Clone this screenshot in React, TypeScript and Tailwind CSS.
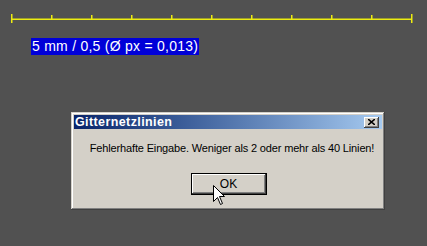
import React from "react";

const TICKS = [11, 51, 91, 131, 171, 211, 251, 291, 331, 371, 411];

function Ruler() {
  return (
    <svg width="427" height="26" className="block fill-[#ecec10]">
      <rect x="11" y="18.5" width="401" height="1.5" />
      {TICKS.map((x, i) => {
        const end = i === 0 || i === TICKS.length - 1;
        return <rect key={x} x={x} y={end ? 14 : 15} width={1.5} height={end ? 9 : 4} />;
      })}
    </svg>
  );
}

function Cursor() {
  return (
    <svg width="13" height="22" viewBox="0 0 13 22" className="absolute left-[213px] top-[185px]">
      <path
        d="M0.5 0.5 L0.5 16.5 L4.5 12.5 L7.5 19.5 L9.5 18.5 L6.5 11.5 L11.5 11.5 Z"
        fill="#fff"
        stroke="#000"
        strokeWidth="1"
      />
    </svg>
  );
}

export default function App() {
  return (
    <div className="relative w-[427px] h-[246px] bg-[#515151] overflow-hidden flex flex-col font-['Liberation_Sans',Arial,sans-serif]">
      <Ruler />

      <div className="ml-[31px] mt-[12px] self-start h-[17px] bg-[#0000d8] px-[1px] text-white text-[14px] leading-[17px] tracking-[0.25px]">
        5 mm / 0,5 (Ø px = 0,013)
      </div>

      <div className="ml-[71px] mt-[57px] w-[314px] h-[98px] bg-[#d4d0c8] p-[3px] flex flex-col shadow-[inset_-1px_-1px_#404040,inset_1px_1px_#d4d0c8,inset_-2px_-2px_#808080,inset_2px_2px_#ffffff]">
        <div className="h-[14px] flex items-center justify-between bg-gradient-to-r from-[#0a246a] to-[#a6caf0] pl-[1px] pr-[3px]">
          <span className="text-white font-bold text-[12.5px] leading-[14px] tracking-[0.4px]">
            Gitternetzlinien
          </span>
          <div className="w-[15px] h-[11px] bg-[#d4d0c8] flex items-center justify-center shadow-[inset_-1px_-1px_#404040,inset_1px_1px_#ffffff,inset_-2px_-2px_#808080]">
            <svg width="7" height="6" viewBox="0 0 7 6">
              <path d="M0 0 L7 6 M7 0 L0 6" stroke="#000" strokeWidth="1.6" />
            </svg>
          </div>
        </div>

        <div className="mt-[12px] pl-[8px] text-center text-[11px] leading-[14px] text-black tracking-[-0.15px]">
          Fehlerhafte Eingabe. Weniger als 2 oder mehr als 40 Linien!
        </div>

        <div className="mt-[18px] flex justify-center pl-[1px]">
          <button className="w-[76px] h-[22px] bg-[#d4d0c8] border border-black text-[12px] leading-[18px] text-black shadow-[inset_-1px_-1px_#404040,inset_1px_1px_#ffffff,inset_-2px_-2px_#808080]">
            OK
          </button>
        </div>
      </div>

      <Cursor />
    </div>
  );
}
